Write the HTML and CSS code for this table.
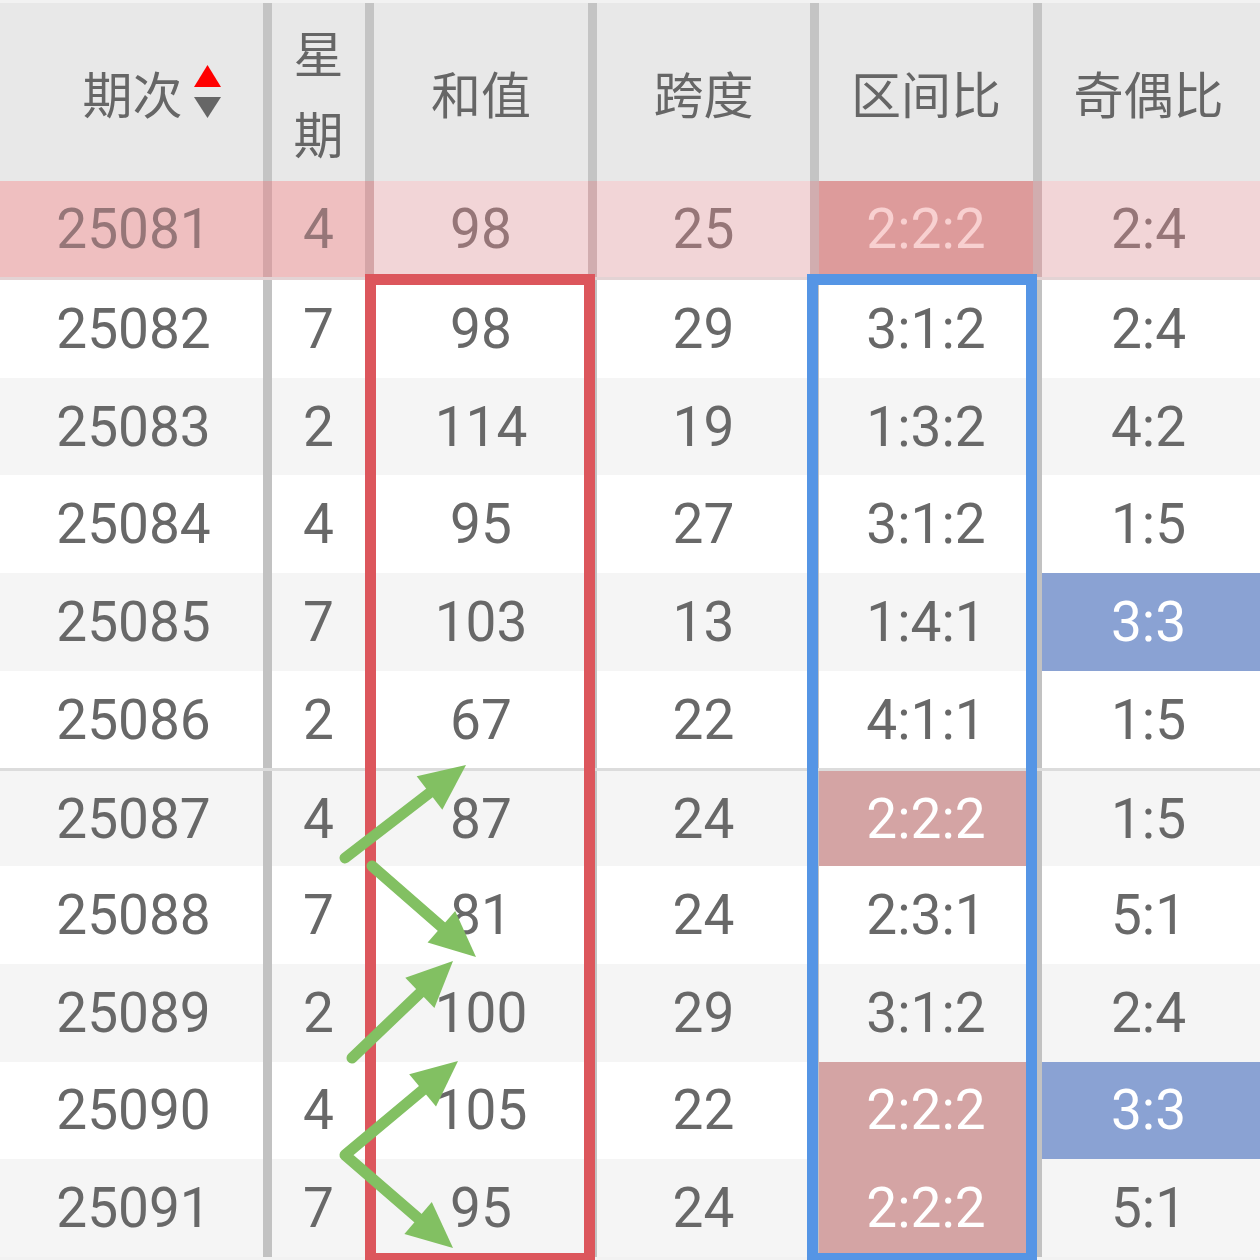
FILE: index.html
```html
<!DOCTYPE html>
<html lang="zh">
<head>
<meta charset="utf-8">
<title>走势表</title>
<link rel="stylesheet" href="styles.css">
</head>
<body>
<div class="page">
  <div class="table">
    <div class="row head">
      <div class="cell"><span class="sortable">期次<svg class="sort" width="27" height="53" viewBox="0 0 27 53"><polygon points="13.5,0 27,22 0,22" fill="#ff0000"/><polygon points="0,32 27,32 13.5,53" fill="#666666"/></svg></span></div>
      <div class="cell stack"><span>星</span><span>期</span></div>
      <div class="cell">和值</div>
      <div class="cell">跨度</div>
      <div class="cell">区间比</div>
      <div class="cell">奇偶比</div>
    </div>
    <div class="row first">
      <div class="cell">25081</div><div class="cell">4</div><div class="cell">98</div><div class="cell">25</div><div class="cell hot">2:2:2</div><div class="cell">2:4</div>
    </div>
    <div class="row">
      <div class="cell">25082</div><div class="cell">7</div><div class="cell">98</div><div class="cell">29</div><div class="cell">3:1:2</div><div class="cell">2:4</div>
    </div>
    <div class="row alt">
      <div class="cell">25083</div><div class="cell">2</div><div class="cell">114</div><div class="cell">19</div><div class="cell">1:3:2</div><div class="cell">4:2</div>
    </div>
    <div class="row">
      <div class="cell">25084</div><div class="cell">4</div><div class="cell">95</div><div class="cell">27</div><div class="cell">3:1:2</div><div class="cell">1:5</div>
    </div>
    <div class="row alt">
      <div class="cell">25085</div><div class="cell">7</div><div class="cell">103</div><div class="cell">13</div><div class="cell">1:4:1</div><div class="cell blue">3:3</div>
    </div>
    <div class="row">
      <div class="cell">25086</div><div class="cell">2</div><div class="cell">67</div><div class="cell">22</div><div class="cell">4:1:1</div><div class="cell">1:5</div>
    </div>
    <div class="row alt split">
      <div class="cell">25087</div><div class="cell">4</div><div class="cell">87</div><div class="cell">24</div><div class="cell red">2:2:2</div><div class="cell">1:5</div>
    </div>
    <div class="row">
      <div class="cell">25088</div><div class="cell">7</div><div class="cell">81</div><div class="cell">24</div><div class="cell">2:3:1</div><div class="cell">5:1</div>
    </div>
    <div class="row alt">
      <div class="cell">25089</div><div class="cell">2</div><div class="cell">100</div><div class="cell">29</div><div class="cell">3:1:2</div><div class="cell">2:4</div>
    </div>
    <div class="row">
      <div class="cell">25090</div><div class="cell">4</div><div class="cell">105</div><div class="cell">22</div><div class="cell red">2:2:2</div><div class="cell blue">3:3</div>
    </div>
    <div class="row alt">
      <div class="cell">25091</div><div class="cell">7</div><div class="cell">95</div><div class="cell">24</div><div class="cell red">2:2:2</div><div class="cell">5:1</div>
    </div>
  </div>

  <div class="frame frame-red"></div>
  <div class="frame frame-blue"></div>

  <svg class="arrows" width="1260" height="1260" viewBox="0 0 1260 1260">
    <g stroke="#82c062" stroke-width="11" stroke-linecap="round" stroke-linejoin="round" fill="none">
      <line x1="345" y1="858" x2="432" y2="791"/>
      <line x1="372" y1="866" x2="443" y2="928"/>
      <line x1="352" y1="1058" x2="421" y2="992"/>
      <polyline points="424,1089 345,1155 419,1219"/>
    </g>
    <g fill="#82c062">
      <polygon points="466,765 442.3,809.7 416.7,776.3"/>
      <polygon points="476,957 427.6,942.5 455.2,910.9"/>
      <polygon points="453,961 434.4,1008 405.3,977.8"/>
      <polygon points="458,1061 436,1106.5 409.2,1074.3"/>
      <polygon points="453,1248 404.4,1233.9 431.8,1202.1"/>
    </g>
  </svg>
</div>
</body>
</html>
```

FILE: styles.css
```css
html, body {
  margin: 0;
  padding: 0;
  background: #ffffff;
}

.page {
  position: relative;
  width: 1260px;
  height: 1260px;
  overflow: hidden;
  background: #f2f2f2;
  padding-top: 3px;
  box-sizing: border-box;
}

.table {
  display: flex;
  flex-direction: column;
  width: 1260px;
}

.row {
  display: grid;
  grid-template-columns: 263px 102px 223px 222px 223px 227px;
  height: 97.7px;
  box-sizing: border-box;
  background: #ffffff;
  font-family: Roboto, "Noto Sans", "Noto Sans CJK SC", sans-serif;
  font-size: 55px;
  color: #686868;
}

.row.alt {
  background: #f5f5f5;
}

.row.split {
  border-top: 3px solid #dcdcdc;
}

.cell {
  display: flex;
  align-items: center;
  justify-content: center;
  box-sizing: border-box;
  border-left: 9px solid #c2c2c2;
  white-space: nowrap;
}

.cell:first-child {
  border-left: none;
  padding-left: 4px;
}

.cell:last-child {
  padding-right: 5px;
}

/* header */
.row.head {
  height: 178px;
  background: #e8e8e8;
  font-family: "Noto Sans CJK SC", "Noto Sans", sans-serif;
  font-size: 50px;
  color: #666666;
}

.row.head .cell:first-child {
  padding-left: 2px;
}

.row.head .cell {
  border-left-color: #c4c4c4;
}

.row.head .stack {
  flex-direction: column;
  line-height: 81px;
}

.sortable {
  position: relative;
  line-height: 1;
}

.sort {
  position: absolute;
  left: 100%;
  top: 50%;
  margin-left: 11px;
  margin-top: -27px;
}

/* first (pinned) row */
.row.first {
  height: 99px;
  border-bottom: 3px solid #e3d3d4;
  background: #f2d5d7;
  color: #967678;
}

.row.first .cell {
  border-left-color: #d1adaf;
}

.row.first .cell:nth-child(1),
.row.first .cell:nth-child(2) {
  background: #efbfc0;
}

.row.first .cell:nth-child(2),
.row.first .cell:nth-child(3) {
  border-left-color: #d5a5a7;
}

.row.first .cell.hot {
  background: #dd9b9b;
  color: #f8d0d0;
}

/* highlighted cells */
.cell.red {
  background: #d4a4a4;
  color: #ffffff;
}

.cell.blue {
  background: #8aa2d3;
  color: #ffffff;
}

/* overlay frames */
.frame {
  position: absolute;
  top: 274px;
  width: 230px;
  height: 990px;
  box-sizing: border-box;
  border: 11px solid;
}

.frame-red {
  left: 365px;
  border-color: #dc565c;
}

.frame-blue {
  left: 807px;
  border-color: #5595e5;
}

.arrows {
  position: absolute;
  left: 0;
  top: 0;
  pointer-events: none;
}
```
